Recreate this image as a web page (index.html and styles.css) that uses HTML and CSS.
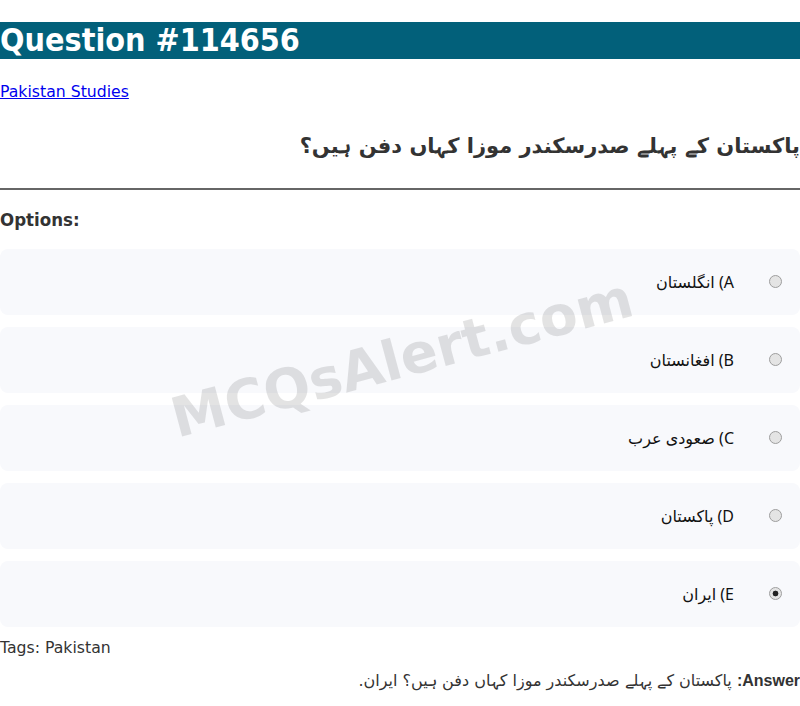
FILE: index.html
```html
<!DOCTYPE html>
<html lang="en">
<head>
<meta charset="utf-8">
<title>Question #114656</title>
<link rel="stylesheet" href="styles.css">
</head>
<body>
<h1 class="title">Question #114656</h1>
<p class="cat"><a href="#">Pakistan Studies</a></p>
<h2 class="question" dir="rtl">پاکستان کے پہلے صدرسکندر موزا کہاں دفن ہیں؟</h2>
<hr class="rule">
<h3 class="opts-head">Options:</h3>
<div class="options" dir="rtl">
  <label class="option"><input class="radio" type="radio" name="q"><span class="otext">A) انگلستان</span></label>
  <label class="option"><input class="radio" type="radio" name="q"><span class="otext">B) افغانستان</span></label>
  <label class="option"><input class="radio" type="radio" name="q"><span class="otext">C) صعودی عرب</span></label>
  <label class="option"><input class="radio" type="radio" name="q"><span class="otext">D) پاکستان</span></label>
  <label class="option"><input class="radio" type="radio" name="q" checked><span class="otext">E) ایران</span></label>
</div>
<p class="tags">Tags: Pakistan</p>
<p class="answer" dir="rtl"><b class="alabel">Answer:</b> پاکستان کے پہلے صدرسکندر موزا کہاں دفن ہیں؟ ایران.</p>
<div class="watermark">MCQsAlert.com</div>
</body>
</html>
```
FILE: styles.css
```css
html, body {
  margin: 0;
  padding: 0;
  background: #fff;
}
body {
  font-family: "DejaVu Sans", sans-serif;
  color: #333;
  position: relative;
  min-height: 706px;
}
.title {
  margin: 22px 0 0;
  background: #02607a;
  color: #fff;
  font-family: "DejaVu Sans Condensed", "DejaVu Sans", sans-serif;
  font-size: 32px;
  line-height: 37px;
  height: 37px;
  font-weight: bold;
}
.cat {
  margin: 24px 0 0;
  font-size: 15.7px;
  line-height: 18px;
}
.cat a {
  color: #0000ee;
}
.question {
  margin: 31px 0 0;
  font-size: 21px;
  line-height: 28px;
  font-weight: bold;
  color: #333;
}
.rule {
  margin: 28px 0 0;
  border: 0;
  border-top: 2px solid #666;
  height: 0;
}
.opts-head {
  margin: 20px 0 0;
  font-family: "DejaVu Sans Condensed", "DejaVu Sans", sans-serif;
  font-size: 18.5px;
  line-height: 20px;
  font-weight: bold;
  color: #333;
}
.options {
  margin-top: 19px;
  display: flex;
  flex-direction: column;
  gap: 12px;
}
.option {
  display: flex;
  align-items: center;
  height: 66px;
  box-sizing: border-box;
  padding: 0 18px 1px;
  background: #f8f9fc;
  border-radius: 8px;
  font-family: "Noto Sans", "DejaVu Sans", sans-serif;
  font-size: 16px;
  color: #111;
}
.radio {
  appearance: none;
  -webkit-appearance: none;
  width: 13px;
  height: 13px;
  margin: 0 0 0 35px;
  border: 1px solid #9e9e9e;
  border-radius: 50%;
  background: #e4e4e4;
  box-sizing: border-box;
  flex: none;
}
.radio:checked {
  background: radial-gradient(circle, #222 0 2.6px, #e4e4e4 3.2px);
}
.tags {
  margin: 12px 0 0;
  font-size: 15.7px;
  line-height: 18px;
}
.answer {
  margin: 15px 0 0;
  font-size: 16px;
  line-height: 18px;
}
.alabel {
  font-family: "Liberation Sans", sans-serif;
}
.watermark {
  position: absolute;
  left: 402px;
  top: 358px;
  transform: translate(-50%, -50%) rotate(-15deg);
  font-size: 55px;
  font-weight: bold;
  color: rgba(0, 0, 0, 0.11);
  white-space: nowrap;
  pointer-events: none;
}
```
